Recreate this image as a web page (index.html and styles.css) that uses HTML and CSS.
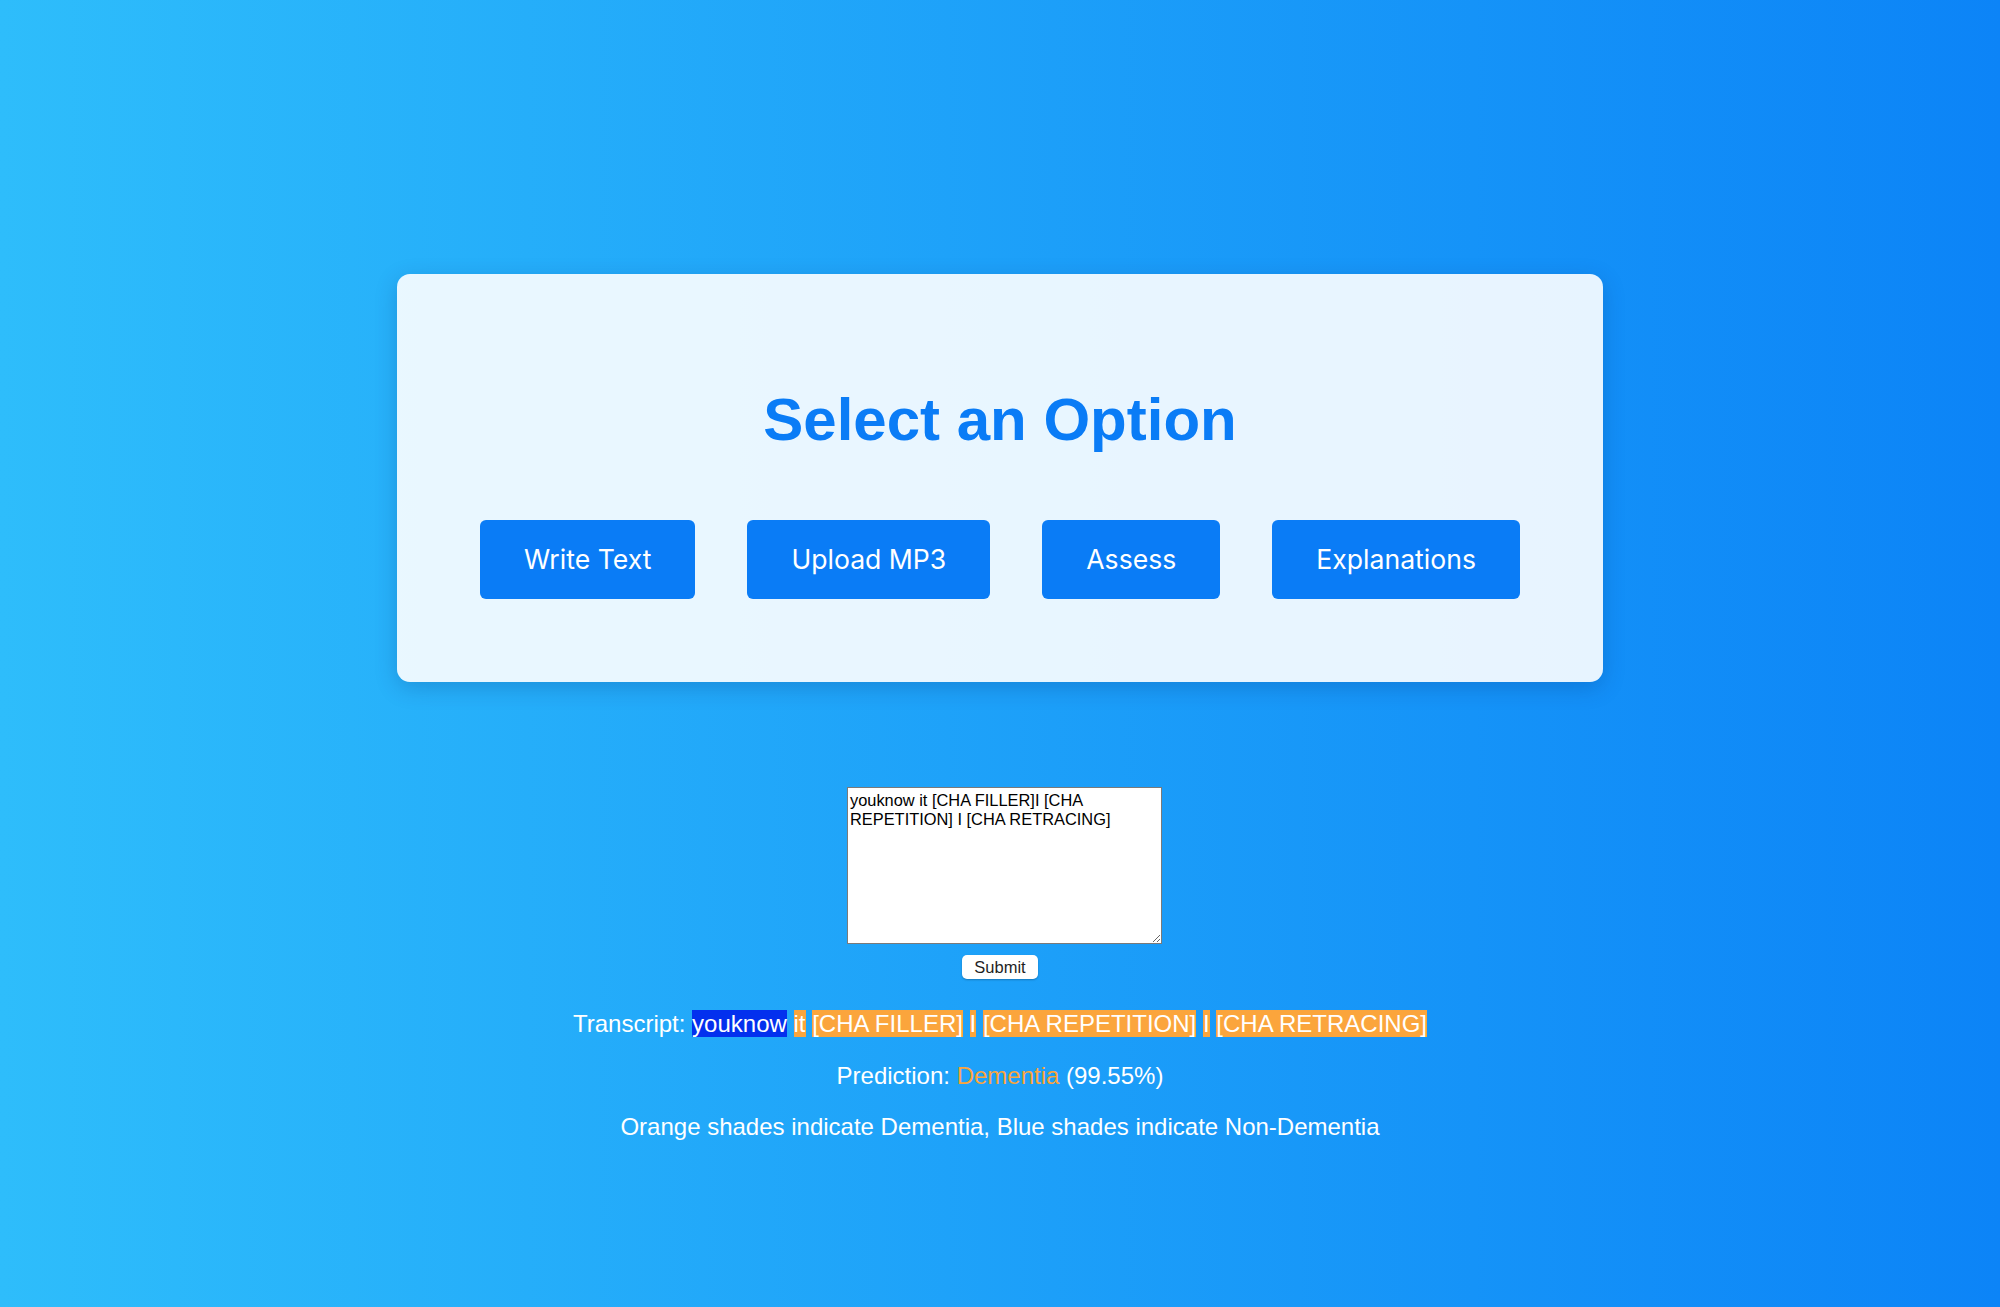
FILE: index.html
```html
<!DOCTYPE html>
<html lang="en">
<head>
<meta charset="utf-8">
<title>Select an Option</title>
<link rel="stylesheet" href="styles.css">
</head>
<body>
  <main class="page">
    <section class="card">
      <h1 class="card-title">Select an Option</h1>
      <div class="options">
        <button class="option-btn" type="button">Write Text</button>
        <button class="option-btn" type="button">Upload MP3</button>
        <button class="option-btn" type="button">Assess</button>
        <button class="option-btn" type="button">Explanations</button>
      </div>
    </section>

    <section class="assess">
      <form class="assess-form">
        <textarea class="assess-input">youknow it [CHA FILLER]I [CHA REPETITION] I [CHA RETRACING]</textarea>
        <button class="submit-btn" type="button">Submit</button>
      </form>
      <div class="results">
        <p class="result-line">Transcript: <span class="hl hl-blue">youknow</span> <span class="hl hl-orange">it</span> <span class="hl hl-orange">[CHA FILLER]</span> <span class="hl hl-orange">I</span> <span class="hl hl-orange">[CHA REPETITION]</span> <span class="hl hl-orange">I</span> <span class="hl hl-orange">[CHA RETRACING]</span></p>
        <p class="result-line">Prediction: <span class="label-dementia">Dementia</span> (99.55%)</p>
        <p class="result-line">Orange shades indicate Dementia, Blue shades indicate Non-Dementia</p>
      </div>
    </section>
  </main>
</body>
</html>
```

FILE: styles.css
```css
html, body {
  margin: 0;
  padding: 0;
}

body {
  min-height: 1307px;
  background: linear-gradient(to right, #2ebdfb 0%, #0c84f7 100%);
  font-family: "Liberation Sans", Arial, Helvetica, sans-serif;
  color: #ffffff;
}

.page {
  display: flex;
  flex-direction: column;
  align-items: center;
  padding-top: 274px;
}

.card {
  box-sizing: border-box;
  width: 1206px;
  padding: 111px 0 83px;
  background: rgba(255, 255, 255, 0.9);
  border-radius: 13px;
  box-shadow: 0 6px 22px rgba(0, 40, 110, 0.22);
  text-align: center;
}

.card-title {
  margin: 0 0 66px;
  font-family: "Liberation Sans", Arial, Helvetica, sans-serif;
  font-size: 60px;
  font-weight: 700;
  line-height: 69px;
  color: #0a7cf6;
}

.options {
  display: flex;
  justify-content: center;
  gap: 52px;
}

.option-btn {
  padding: 24px 44px;
  border: none;
  border-radius: 6px;
  background: #0a7cf6;
  color: #ffffff;
  font-family: Inter, "Liberation Sans", sans-serif;
  font-size: 26.6px;
  line-height: 31px;
  cursor: pointer;
}

.assess {
  display: flex;
  flex-direction: column;
  align-items: center;
  margin-top: 105px;
}

.assess-form {
  display: flex;
  flex-direction: column;
  align-items: center;
  gap: 11px;
}

.assess-input {
  box-sizing: border-box;
  width: 315px;
  height: 157px;
  margin: 0 0 0 9px;
  padding: 3px 2px 2px;
  border: 1px solid #7a7a7a;
  background: #ffffff;
  color: #000000;
  font-family: "Liberation Sans", Arial, Helvetica, sans-serif;
  font-size: 16.4px;
  line-height: 19px;
  resize: both;
}

.submit-btn {
  box-sizing: border-box;
  height: 24px;
  padding: 0 12px;
  border: none;
  border-radius: 5px;
  background: #ffffff;
  box-shadow: 0 1px 2px rgba(0, 0, 0, 0.25);
  color: #1f1f1f;
  font-family: "Liberation Sans", Arial, Helvetica, sans-serif;
  font-size: 16.5px;
  line-height: 24px;
}

.results {
  margin-top: 7px;
  text-align: center;
}

.result-line {
  margin: 24px 0;
  font-size: 24px;
  line-height: 27.6px;
  color: #ffffff;
}

.hl {
  color: #ffffff;
}

.hl-blue {
  background: #0330ee;
}

.hl-orange {
  background: #fba53c;
}

.label-dementia {
  color: #fba53c;
}
```
